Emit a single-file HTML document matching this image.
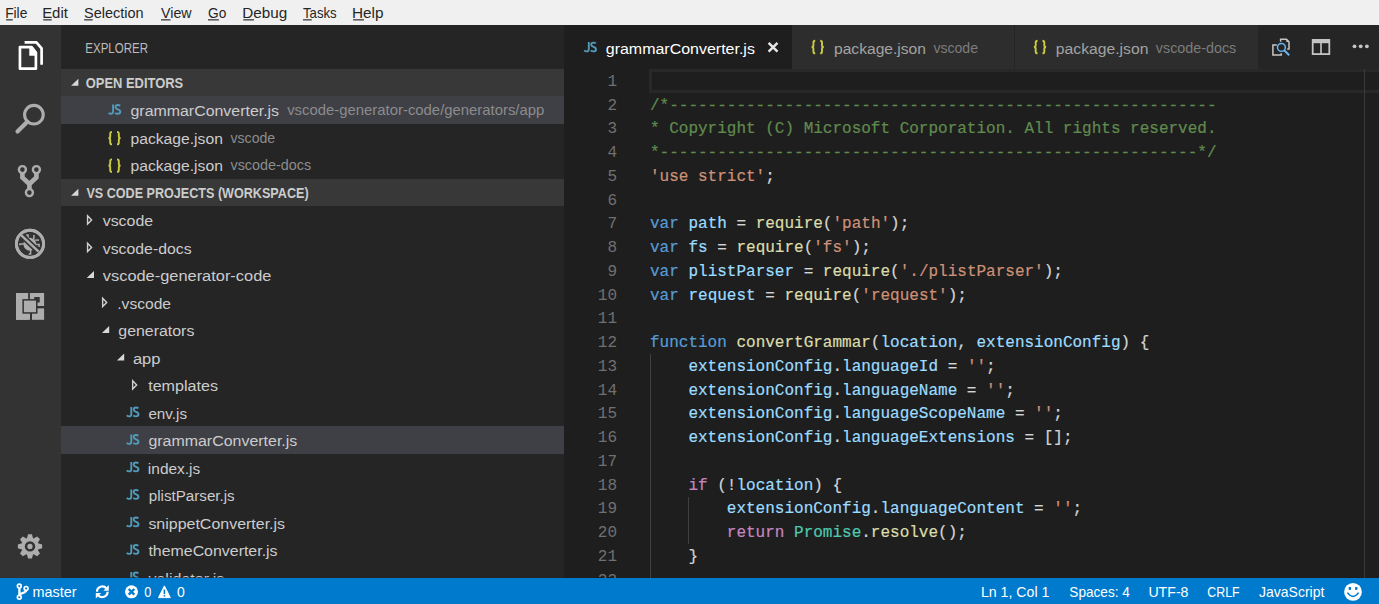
<!DOCTYPE html>
<html><head><meta charset="utf-8">
<style>
*{margin:0;padding:0;box-sizing:border-box}
html,body{width:1379px;height:604px;overflow:hidden;background:#1e1e1e;font-family:"Liberation Sans",sans-serif}
.a{position:absolute}
#menu{left:0;top:0;width:1379px;height:25px;background:#f0f0f0}
#menu span{position:absolute;top:4px;font-size:15px;color:#000;white-space:pre}
#menu span u{text-decoration:none;border-bottom:1.5px solid #6a6a6a}
#act{left:0;top:25px;width:61px;height:553px;background:#333333}
#side{left:61px;top:25px;width:503px;height:553px;background:#252526;overflow:hidden}
.hdr{position:absolute;left:0;width:503px;height:27.5px;background:#383838;color:#cccccc;font-weight:bold;font-size:14.5px}
.row{position:absolute;left:0;width:503px;height:27.5px;color:#cccccc;font-size:16px;white-space:pre}
.row.sel{background:#37373d}
.row .t{position:absolute;top:4px}
.desc{color:#8b8b8b;font-size:15px}
.js{position:absolute;color:#519aba;font-size:11.5px;font-weight:bold;letter-spacing:-0.5px}
.br{position:absolute;color:#cbcb41;font-size:13px;font-weight:bold}
#tabs{left:564px;top:25px;width:815px;height:44px;background:#252526}
.tab{position:absolute;top:0;height:44px;background:#2d2d2d;white-space:pre}
#editor{left:564px;top:69px;width:815px;height:508.5px;background:#1e1e1e;overflow:hidden}
.ln{position:absolute;left:0;width:53px;text-align:right;color:#707070;transform:translateY(2px);font-family:"Liberation Mono",monospace;font-size:16px;height:23.75px;line-height:23.75px}
.cl{position:absolute;left:86px;transform:translateY(2px);-webkit-text-stroke:0.2px currentColor;font-family:"Liberation Mono",monospace;font-size:16px;height:23.75px;line-height:23.75px;white-space:pre;color:#d4d4d4}
.c{color:#608b4e}.s{color:#ce9178}.k{color:#569cd6}.v{color:#9cdcfe}.f{color:#dcdcaa}.p{color:#c586c0}.y{color:#4ec9b0}
#status{left:0;top:577.5px;width:1379px;height:26.5px;background:#007acc;color:#fff;font-size:14.2px}
#status span{position:absolute;top:5px;white-space:pre}
</style></head><body>
<div id="menu" class="a"></div>
<div id="act" class="a">
<svg class="a" style="left:0;top:0" width="61" height="553" viewBox="0 25 61 553">
 <!-- files -->
 <g fill="none" stroke="#ffffff" stroke-width="2.7" stroke-linejoin="round">
  <path d="M19.95 47.2 H31.6 L35.9 52.6 V68.7 H19.95 Z"/>
  <path d="M24.6 42.4 H36.4 L41.6 48.4 V64.8"/>
 </g>
 <path d="M29.3 46.5 H31.8 L36.6 52.4 V55.7 H29.3 Z" fill="#fff"/>
 <!-- search -->
 <g stroke="#adadad" fill="none">
  <circle cx="33.9" cy="114.7" r="9.3" stroke-width="3.1"/>
  <path d="M27.3 121.8 L17.5 131.5" stroke-width="4.2" stroke-linecap="round"/>
 </g>
 <!-- scm -->
 <g stroke="#adadad" fill="none" stroke-width="2.4">
  <circle cx="22.4" cy="169.6" r="3.5"/>
  <circle cx="36.4" cy="169.6" r="3.5"/>
  <circle cx="29.4" cy="192.6" r="3.5"/>
 </g>
 <path d="M22.4 173 V177.5 L29.4 184 L36.4 177.5 V173 M29.4 184 V189" stroke="#adadad" stroke-width="4.6" fill="none" stroke-linejoin="miter"/>
 <!-- debug -->
 <circle cx="30" cy="243.8" r="13.6" stroke="#adadad" stroke-width="2.9" fill="none"/>
 <ellipse cx="29.8" cy="244.2" rx="6.3" ry="6.5" fill="#adadad"/>
 <g stroke="#adadad" stroke-width="1.5" fill="none">
  <path d="M26.2 234.9 H28 V240"/>
  <path d="M33.9 235 V239.3"/>
  <path d="M35.2 240.1 H39"/>
  <path d="M35 244.6 H39.1 V247"/>
  <path d="M19.9 245.3 V244 H24.2"/>
  <path d="M30.6 249.5 V254 H28.7"/>
 </g>
 <path d="M20.6 234.6 L38.6 251.6" stroke="#333333" stroke-width="5.6"/>
 <path d="M20.6 234.6 L38.6 251.6" stroke="#adadad" stroke-width="2.5"/>
 <circle cx="30" cy="243.8" r="13.6" stroke="#adadad" stroke-width="2.9" fill="none"/>
 <!-- extensions -->
 <g fill="#adadad">
  <rect x="16" y="293" width="12.2" height="26.8"/>
  <rect x="28.2" y="293" width="2" height="7"/>
  <rect x="16" y="312.5" width="14.2" height="7.3"/>
  <rect x="29.9" y="293" width="14.2" height="13"/>
  <rect x="32" y="308.2" width="12.1" height="11.6"/>
 </g>
 <rect x="34.2" y="297" width="5.5" height="5.5" fill="#333333"/>
 <rect x="22.4" y="299.1" width="15.1" height="14.6" fill="#333333"/>
 <rect x="23.9" y="300.6" width="12.1" height="11.6" fill="#adadad"/>
 <rect x="28.2" y="293" width="1.7" height="6.3" fill="#333333"/>
 <rect x="30.2" y="313.5" width="1.7" height="6.3" fill="#333333"/>
 <rect x="37.3" y="306" width="6.8" height="2.2" fill="#333333"/>
 <!-- gear -->
 <g transform="translate(30 546.4)">
  <path fill="#adadad" d="M-3.03 -8.05 L-1.96 -12.14 L1.96 -12.14 L3.03 -8.05 L3.55 -7.83 L7.20 -9.97 L9.97 -7.20 L7.83 -3.55 L8.05 -3.03 L12.14 -1.96 L12.14 1.96 L8.05 3.03 L7.83 3.55 L9.97 7.20 L7.20 9.97 L3.55 7.83 L3.03 8.05 L1.96 12.14 L-1.96 12.14 L-3.03 8.05 L-3.55 7.83 L-7.20 9.97 L-9.97 7.20 L-7.83 3.55 L-8.05 3.03 L-12.14 1.96 L-12.14 -1.96 L-8.05 -3.03 L-7.83 -3.55 L-9.97 -7.20 L-7.20 -9.97 L-3.55 -7.83Z"/>
  <circle r="5.2" fill="#333333"/>
  <circle r="2.6" fill="#adadad"/>
 </g>
</svg>
</div>
<div id="side" class="a"><div class="a" style="left:0;top:43.75px;width:503px;height:27.5px;background:#383838"></div><div class="a" style="left:0;top:153.75px;width:503px;height:27.5px;background:#383838"></div><div class="a" style="left:0;top:71.25px;width:503px;height:27.5px;background:#3f3f46"></div><div class="a" style="left:0;top:401.25px;width:503px;height:27.5px;background:#3f3f46"></div></div>
<div id="tabs" class="a"><div class="a" style="left:0;top:0;width:228px;height:44px;background:#1e1e1e"></div><div class="a" style="left:228px;top:0;width:222px;height:44px;background:#2d2d2d"></div><div class="a" style="left:451px;top:0;width:243px;height:44px;background:#2d2d2d"></div></div>
<svg class="a" style="left:1262px;top:32px" width="117" height="30" viewBox="1262 32 117 30">
 <g fill="none" stroke="#c5c5c5" stroke-width="1.5">
  <path d="M1280.6 41.8 V39.2 H1286.5 L1289 41.8 V48.9 H1287.2"/>
  <path d="M1276.8 45 H1272.9 V55.1 H1281.2 V53.2"/>
 </g>
 <path d="M1286.3 39 L1289.2 42 L1286.3 42 Z" fill="#c5c5c5"/>
 <circle cx="1281.4" cy="47.4" r="3.9" stroke="#6ab4ee" stroke-width="1.5" fill="none"/>
 <path d="M1284.2 50.2 L1289.2 55.2" stroke="#6ab4ee" stroke-width="2"/>
 <rect x="1312.7" y="40" width="16.6" height="14.1" stroke="#c5c5c5" stroke-width="1.8" fill="none"/>
 <rect x="1312" y="39.2" width="18" height="4" fill="#c5c5c5"/>
 <rect x="1320.2" y="40" width="1.6" height="14" fill="#c5c5c5"/>
 <circle cx="1354.5" cy="46.3" r="1.9" fill="#c5c5c5"/>
 <circle cx="1360.7" cy="46.3" r="1.9" fill="#c5c5c5"/>
 <circle cx="1366.9" cy="46.3" r="1.9" fill="#c5c5c5"/>
</svg>
<div id="editor" class="a">
<div class="a" style="left:85px;top:0;width:740px;height:23.8px;border:3px solid #282828"></div>
<div class="ln" style="top:0px">1</div><div class="cl" style="top:0px"></div>
<div class="ln" style="top:24px">2</div><div class="cl" style="top:24px"><span class=c>/*---------------------------------------------------------</span></div>
<div class="ln" style="top:47px">3</div><div class="cl" style="top:47px"><span class=c>* Copyright (C) Microsoft Corporation. All rights reserved.</span></div>
<div class="ln" style="top:71px">4</div><div class="cl" style="top:71px"><span class=c>*--------------------------------------------------------*/</span></div>
<div class="ln" style="top:95px">5</div><div class="cl" style="top:95px"><span class=s>'use strict'</span>;</div>
<div class="ln" style="top:119px">6</div><div class="cl" style="top:119px"></div>
<div class="ln" style="top:142px">7</div><div class="cl" style="top:142px"><span class=k>var</span> <span class=v>path</span> = <span class=f>require</span>(<span class=s>'path'</span>);</div>
<div class="ln" style="top:166px">8</div><div class="cl" style="top:166px"><span class=k>var</span> <span class=v>fs</span> = <span class=f>require</span>(<span class=s>'fs'</span>);</div>
<div class="ln" style="top:190px">9</div><div class="cl" style="top:190px"><span class=k>var</span> <span class=v>plistParser</span> = <span class=f>require</span>(<span class=s>'./plistParser'</span>);</div>
<div class="ln" style="top:214px">10</div><div class="cl" style="top:214px"><span class=k>var</span> <span class=v>request</span> = <span class=f>require</span>(<span class=s>'request'</span>);</div>
<div class="ln" style="top:237px">11</div><div class="cl" style="top:237px"></div>
<div class="ln" style="top:261px">12</div><div class="cl" style="top:261px"><span class=k>function</span> <span class=f>convertGrammar</span>(<span class=v>location</span>, <span class=v>extensionConfig</span>) {</div>
<div class="ln" style="top:285px">13</div><div class="cl" style="top:285px">    <span class=v>extensionConfig</span>.<span class=v>languageId</span> = <span class=s>''</span>;</div>
<div class="ln" style="top:309px">14</div><div class="cl" style="top:309px">    <span class=v>extensionConfig</span>.<span class=v>languageName</span> = <span class=s>''</span>;</div>
<div class="ln" style="top:332px">15</div><div class="cl" style="top:332px">    <span class=v>extensionConfig</span>.<span class=v>languageScopeName</span> = <span class=s>''</span>;</div>
<div class="ln" style="top:356px">16</div><div class="cl" style="top:356px">    <span class=v>extensionConfig</span>.<span class=v>languageExtensions</span> = [];</div>
<div class="ln" style="top:380px">17</div><div class="cl" style="top:380px"></div>
<div class="ln" style="top:404px">18</div><div class="cl" style="top:404px">    <span class=p>if</span> (!<span class=v>location</span>) {</div>
<div class="ln" style="top:427px">19</div><div class="cl" style="top:427px">        <span class=v>extensionConfig</span>.<span class=v>languageContent</span> = <span class=s>''</span>;</div>
<div class="ln" style="top:451px">20</div><div class="cl" style="top:451px">        <span class=p>return</span> <span class=y>Promise</span>.<span class=f>resolve</span>();</div>
<div class="ln" style="top:475px">21</div><div class="cl" style="top:475px">    }</div>
<div class="ln" style="top:499px">22</div><div class="cl" style="top:499px"></div>
<div class="a" style="left:85.5px;top:285.0px;width:1px;height:237.5px;background:#404040"></div>
<div class="a" style="left:124px;top:427.5px;width:1px;height:47.5px;background:#404040"></div>
<div class="a" style="left:800px;top:0;width:1px;height:510px;background:#3a3a3a"></div>
</div>
<div id="status" class="a">
<svg class="a" style="left:0;top:0" width="200" height="26.5" viewBox="0 577.5 200 26.5">
 <g stroke="#fff" fill="none" stroke-width="1.7">
  <circle cx="19.3" cy="585.6" r="1.9"/>
  <circle cx="26.1" cy="587.9" r="1.9"/>
  <circle cx="19.3" cy="596.8" r="1.9"/>
 </g>
 <path d="M19.4 587.4 V595 M26.1 589.7 C26.1 593 20 592.3 19.6 594.5" stroke="#fff" stroke-width="2.3" fill="none"/>
 <g stroke="#fff" fill="none" stroke-width="2.2">
  <path d="M97 591.3 A5.3 5.3 0 0 1 106.4 587.9"/>
  <path d="M107.6 591.3 A5.3 5.3 0 0 1 98.2 594.7"/>
 </g>
 <path d="M108.8 584.6 V590.2 H103.4 Z M95.8 598 V592.4 H101.2 Z" fill="#fff"/>
 <circle cx="131.5" cy="591.3" r="6.5" fill="#fff"/>
 <path d="M128.7 588.5 L134.3 594.1 M134.3 588.5 L128.7 594.1" stroke="#007acc" stroke-width="2.3"/>
 <path d="M164.4 585.4 L170.3 597.1 L158.5 597.1 Z" fill="#fff" stroke="#fff" stroke-width="1" stroke-linejoin="round"/>
 <rect x="163.6" y="589" width="1.6" height="4.6" fill="#007acc"/>
 <rect x="163.6" y="594.6" width="1.6" height="1.5" fill="#007acc"/>
</svg>
<svg class="a" style="left:1342px;top:4.5px" width="22" height="20" viewBox="0 0 22 20">
 <circle cx="11" cy="9.9" r="8.9" fill="#fff"/>
 <rect x="6.7" y="5" width="2.3" height="2.9" fill="#007acc"/>
 <rect x="13.1" y="5" width="2.3" height="2.9" fill="#007acc"/>
 <path d="M5.4 10.6 Q11 18.2 16.6 10.6" stroke="#007acc" stroke-width="1.5" fill="none"/>
</svg>
</div>
<svg class="a" style="left:0;top:0;pointer-events:none" width="1379" height="604" font-family="Liberation Sans"><defs><clipPath id="sc"><rect x="61" y="25" width="503" height="552.5"/></clipPath></defs><rect x="6.1" y="19" width="6.7" height="1.6" fill="#5f5f5f"/><rect x="43.2" y="19" width="8.5" height="1.6" fill="#5f5f5f"/><rect x="84.1" y="19" width="8.6" height="1.6" fill="#5f5f5f"/><rect x="161.0" y="19" width="9.5" height="1.6" fill="#5f5f5f"/><rect x="208.0" y="19" width="10.9" height="1.6" fill="#5f5f5f"/><rect x="243.3" y="19" width="10.7" height="1.6" fill="#5f5f5f"/><rect x="303.0" y="19" width="8.7" height="1.6" fill="#5f5f5f"/><rect x="353.1" y="19" width="10.9" height="1.6" fill="#5f5f5f"/>
<path d="M71.10 85.70 L78.40 85.70 L78.40 78.70 Z" fill="#d8d8d8"/>
<path d="M71.10 195.70 L78.40 195.70 L78.40 188.70 Z" fill="#d8d8d8"/>
<g transform="translate(108.10 104.40)" fill="none" stroke="#519aba" stroke-width="1.9"><path d="M5 0 V7.2 Q5 9.4 2.8 9.4 Q1.4 9.4 0.4 8.4"/><path d="M12.1 1.3 Q11.1 0.6 9.7 0.6 Q7.4 0.6 7.4 2.6 Q7.4 4.2 9.7 4.9 Q12.2 5.7 12.2 7.4 Q12.2 9.4 9.6 9.4 Q8.1 9.4 7 8.5"/></g>
<g transform="translate(107.80 130.95)" fill="none" stroke="#cbcb41" stroke-width="1.9"><path d="M4.2 0.9 Q2.4 0.9 2.4 2.8 V5.3 Q2.4 7.15 0.6 7.15 Q2.4 7.15 2.4 9 V11.5 Q2.4 13.4 4.2 13.4"/><path d="M9.2 0.9 Q11 0.9 11 2.8 V5.3 Q11 7.15 12.8 7.15 Q11 7.15 11 9 V11.5 Q11 13.4 9.2 13.4"/></g>
<g transform="translate(107.80 158.45)" fill="none" stroke="#cbcb41" stroke-width="1.9"><path d="M4.2 0.9 Q2.4 0.9 2.4 2.8 V5.3 Q2.4 7.15 0.6 7.15 Q2.4 7.15 2.4 9 V11.5 Q2.4 13.4 4.2 13.4"/><path d="M9.2 0.9 Q11 0.9 11 2.8 V5.3 Q11 7.15 12.8 7.15 Q11 7.15 11 9 V11.5 Q11 13.4 9.2 13.4"/></g>
<path d="M87.55 215.80 L91.60 219.95 L87.55 224.10 Z" fill="none" stroke="#d0d0d0" stroke-width="1.4" stroke-linejoin="miter"/>
<path d="M87.55 243.30 L91.60 247.45 L87.55 251.60 Z" fill="none" stroke="#d0d0d0" stroke-width="1.4" stroke-linejoin="miter"/>
<path d="M86.70 277.95 L94.00 277.95 L94.00 270.95 Z" fill="#d8d8d8"/>
<path d="M102.65 298.30 L106.70 302.45 L102.65 306.60 Z" fill="none" stroke="#d0d0d0" stroke-width="1.4" stroke-linejoin="miter"/>
<path d="M101.90 332.95 L109.20 332.95 L109.20 325.95 Z" fill="#d8d8d8"/>
<path d="M116.90 360.45 L124.20 360.45 L124.20 353.45 Z" fill="#d8d8d8"/>
<path d="M132.65 380.80 L136.70 384.95 L132.65 389.10 Z" fill="none" stroke="#d0d0d0" stroke-width="1.4" stroke-linejoin="miter"/>
<g transform="translate(126.30 406.95)" fill="none" stroke="#519aba" stroke-width="1.9"><path d="M5 0 V7.2 Q5 9.4 2.8 9.4 Q1.4 9.4 0.4 8.4"/><path d="M12.1 1.3 Q11.1 0.6 9.7 0.6 Q7.4 0.6 7.4 2.6 Q7.4 4.2 9.7 4.9 Q12.2 5.7 12.2 7.4 Q12.2 9.4 9.6 9.4 Q8.1 9.4 7 8.5"/></g>
<g transform="translate(126.30 434.45)" fill="none" stroke="#519aba" stroke-width="1.9"><path d="M5 0 V7.2 Q5 9.4 2.8 9.4 Q1.4 9.4 0.4 8.4"/><path d="M12.1 1.3 Q11.1 0.6 9.7 0.6 Q7.4 0.6 7.4 2.6 Q7.4 4.2 9.7 4.9 Q12.2 5.7 12.2 7.4 Q12.2 9.4 9.6 9.4 Q8.1 9.4 7 8.5"/></g>
<g transform="translate(126.30 461.95)" fill="none" stroke="#519aba" stroke-width="1.9"><path d="M5 0 V7.2 Q5 9.4 2.8 9.4 Q1.4 9.4 0.4 8.4"/><path d="M12.1 1.3 Q11.1 0.6 9.7 0.6 Q7.4 0.6 7.4 2.6 Q7.4 4.2 9.7 4.9 Q12.2 5.7 12.2 7.4 Q12.2 9.4 9.6 9.4 Q8.1 9.4 7 8.5"/></g>
<g transform="translate(126.30 489.45)" fill="none" stroke="#519aba" stroke-width="1.9"><path d="M5 0 V7.2 Q5 9.4 2.8 9.4 Q1.4 9.4 0.4 8.4"/><path d="M12.1 1.3 Q11.1 0.6 9.7 0.6 Q7.4 0.6 7.4 2.6 Q7.4 4.2 9.7 4.9 Q12.2 5.7 12.2 7.4 Q12.2 9.4 9.6 9.4 Q8.1 9.4 7 8.5"/></g>
<g transform="translate(126.30 516.95)" fill="none" stroke="#519aba" stroke-width="1.9"><path d="M5 0 V7.2 Q5 9.4 2.8 9.4 Q1.4 9.4 0.4 8.4"/><path d="M12.1 1.3 Q11.1 0.6 9.7 0.6 Q7.4 0.6 7.4 2.6 Q7.4 4.2 9.7 4.9 Q12.2 5.7 12.2 7.4 Q12.2 9.4 9.6 9.4 Q8.1 9.4 7 8.5"/></g>
<g transform="translate(126.30 544.45)" fill="none" stroke="#519aba" stroke-width="1.9"><path d="M5 0 V7.2 Q5 9.4 2.8 9.4 Q1.4 9.4 0.4 8.4"/><path d="M12.1 1.3 Q11.1 0.6 9.7 0.6 Q7.4 0.6 7.4 2.6 Q7.4 4.2 9.7 4.9 Q12.2 5.7 12.2 7.4 Q12.2 9.4 9.6 9.4 Q8.1 9.4 7 8.5"/></g>
<g clip-path="url(#sc)"><g transform="translate(126.30 571.95)" fill="none" stroke="#519aba" stroke-width="1.9"><path d="M5 0 V7.2 Q5 9.4 2.8 9.4 Q1.4 9.4 0.4 8.4"/><path d="M12.1 1.3 Q11.1 0.6 9.7 0.6 Q7.4 0.6 7.4 2.6 Q7.4 4.2 9.7 4.9 Q12.2 5.7 12.2 7.4 Q12.2 9.4 9.6 9.4 Q8.1 9.4 7 8.5"/></g></g>
<g transform="translate(583.80 42.00)" fill="none" stroke="#519aba" stroke-width="1.9"><path d="M5 0 V7.2 Q5 9.4 2.8 9.4 Q1.4 9.4 0.4 8.4"/><path d="M12.1 1.3 Q11.1 0.6 9.7 0.6 Q7.4 0.6 7.4 2.6 Q7.4 4.2 9.7 4.9 Q12.2 5.7 12.2 7.4 Q12.2 9.4 9.6 9.4 Q8.1 9.4 7 8.5"/></g>
<g transform="translate(811.00 39.90)" fill="none" stroke="#cbcb41" stroke-width="1.9"><path d="M4.2 0.9 Q2.4 0.9 2.4 2.8 V5.3 Q2.4 7.15 0.6 7.15 Q2.4 7.15 2.4 9 V11.5 Q2.4 13.4 4.2 13.4"/><path d="M9.2 0.9 Q11 0.9 11 2.8 V5.3 Q11 7.15 12.8 7.15 Q11 7.15 11 9 V11.5 Q11 13.4 9.2 13.4"/></g>
<g transform="translate(1033.30 39.90)" fill="none" stroke="#cbcb41" stroke-width="1.9"><path d="M4.2 0.9 Q2.4 0.9 2.4 2.8 V5.3 Q2.4 7.15 0.6 7.15 Q2.4 7.15 2.4 9 V11.5 Q2.4 13.4 4.2 13.4"/><path d="M9.2 0.9 Q11 0.9 11 2.8 V5.3 Q11 7.15 12.8 7.15 Q11 7.15 11 9 V11.5 Q11 13.4 9.2 13.4"/></g>
<path d="M768.6 42.9 L777.5 51.6 M777.5 42.9 L768.6 51.6" stroke="#e6e6e6" stroke-width="2.5"/>
<text x="5.15" y="17.70" font-size="14.5" fill="#262626" textLength="22.21" lengthAdjust="spacingAndGlyphs">File</text>
<text x="42.17" y="17.70" font-size="14.5" fill="#262626" textLength="25.76" lengthAdjust="spacingAndGlyphs">Edit</text>
<text x="84.10" y="17.70" font-size="14.5" fill="#262626" textLength="59.56" lengthAdjust="spacingAndGlyphs">Selection</text>
<text x="161.00" y="17.70" font-size="14.5" fill="#262626" textLength="30.68" lengthAdjust="spacingAndGlyphs">View</text>
<text x="208.00" y="17.70" font-size="14.5" fill="#262626" textLength="18.26" lengthAdjust="spacingAndGlyphs">Go</text>
<text x="242.25" y="17.70" font-size="14.5" fill="#262626" textLength="44.92" lengthAdjust="spacingAndGlyphs">Debug</text>
<text x="303.00" y="17.70" font-size="14.5" fill="#262626" textLength="33.63" lengthAdjust="spacingAndGlyphs">Tasks</text>
<text x="352.04" y="17.70" font-size="14.5" fill="#262626" textLength="31.53" lengthAdjust="spacingAndGlyphs">Help</text>
<text x="85.28" y="53.00" font-size="14" fill="#bbbbbb" textLength="62.71" lengthAdjust="spacingAndGlyphs">EXPLORER</text>
<text x="85.80" y="87.80" font-size="14" font-weight="bold" fill="#cccccc" textLength="97.31" lengthAdjust="spacingAndGlyphs">OPEN EDITORS</text>
<text x="86.40" y="198.20" font-size="14" font-weight="bold" fill="#cccccc" textLength="222.20" lengthAdjust="spacingAndGlyphs">VS CODE PROJECTS (WORKSPACE)</text>
<text x="130.50" y="116.25" font-size="15.2" fill="#cccccc" textLength="148.57" lengthAdjust="spacingAndGlyphs">grammarConverter.js</text>
<text x="287.20" y="115.35" font-size="15.0" fill="#8c8c8c" textLength="257.14" lengthAdjust="spacingAndGlyphs">vscode-generator-code/generators/app</text>
<text x="130.50" y="143.75" font-size="15.2" fill="#cccccc" textLength="92.36" lengthAdjust="spacingAndGlyphs">package.json</text>
<text x="230.50" y="142.85" font-size="15.0" fill="#8c8c8c" textLength="44.72" lengthAdjust="spacingAndGlyphs">vscode</text>
<text x="130.50" y="171.25" font-size="15.2" fill="#cccccc" textLength="92.36" lengthAdjust="spacingAndGlyphs">package.json</text>
<text x="230.50" y="170.35" font-size="15.0" fill="#8c8c8c" textLength="80.68" lengthAdjust="spacingAndGlyphs">vscode-docs</text>
<text x="102.70" y="226.25" font-size="15.2" fill="#cccccc" textLength="50.47" lengthAdjust="spacingAndGlyphs">vscode</text>
<text x="102.80" y="253.75" font-size="15.2" fill="#cccccc" textLength="88.78" lengthAdjust="spacingAndGlyphs">vscode-docs</text>
<text x="102.80" y="281.25" font-size="15.2" fill="#cccccc" textLength="168.58" lengthAdjust="spacingAndGlyphs">vscode-generator-code</text>
<text x="117.27" y="308.75" font-size="15.2" fill="#cccccc" textLength="53.79" lengthAdjust="spacingAndGlyphs">.vscode</text>
<text x="118.30" y="336.25" font-size="15.2" fill="#cccccc" textLength="76.07" lengthAdjust="spacingAndGlyphs">generators</text>
<text x="132.90" y="363.75" font-size="15.2" fill="#cccccc" textLength="27.59" lengthAdjust="spacingAndGlyphs">app</text>
<text x="148.20" y="391.25" font-size="15.2" fill="#cccccc" textLength="69.87" lengthAdjust="spacingAndGlyphs">templates</text>
<text x="148.40" y="418.75" font-size="15.2" fill="#cccccc" textLength="38.59" lengthAdjust="spacingAndGlyphs">env.js</text>
<text x="148.40" y="446.25" font-size="15.2" fill="#cccccc" textLength="148.87" lengthAdjust="spacingAndGlyphs">grammarConverter.js</text>
<text x="147.88" y="473.75" font-size="15.2" fill="#cccccc" textLength="52.40" lengthAdjust="spacingAndGlyphs">index.js</text>
<text x="148.80" y="501.25" font-size="15.2" fill="#cccccc" textLength="85.89" lengthAdjust="spacingAndGlyphs">plistParser.js</text>
<text x="148.40" y="528.75" font-size="15.2" fill="#cccccc" textLength="136.67" lengthAdjust="spacingAndGlyphs">snippetConverter.js</text>
<text x="148.40" y="556.25" font-size="15.2" fill="#cccccc" textLength="129.17" lengthAdjust="spacingAndGlyphs">themeConverter.js</text>
<text x="148.40" y="583.75" font-size="15.2" fill="#cccccc" textLength="75.87" lengthAdjust="spacingAndGlyphs" clip-path="url(#sc)">validator.js</text>
<text x="605.80" y="53.90" font-size="15.2" fill="#ffffff" textLength="149.07" lengthAdjust="spacingAndGlyphs">grammarConverter.js</text>
<text x="834.00" y="53.90" font-size="15.2" fill="#a3a3a3" textLength="91.96" lengthAdjust="spacingAndGlyphs">package.json</text>
<text x="933.40" y="53.00" font-size="15.0" fill="#7c7c7c" textLength="44.62" lengthAdjust="spacingAndGlyphs">vscode</text>
<text x="1055.80" y="53.90" font-size="15.2" fill="#a3a3a3" textLength="92.66" lengthAdjust="spacingAndGlyphs">package.json</text>
<text x="1155.80" y="53.00" font-size="15.0" fill="#7c7c7c" textLength="80.48" lengthAdjust="spacingAndGlyphs">vscode-docs</text>
<text x="32.60" y="597.30" font-size="14.2" fill="#ffffff" textLength="44.02" lengthAdjust="spacingAndGlyphs">master</text>
<text x="144.30" y="597.30" font-size="14.2" fill="#ffffff" textLength="7.10" lengthAdjust="spacingAndGlyphs">0</text>
<text x="177.00" y="597.30" font-size="14.2" fill="#ffffff" textLength="7.79" lengthAdjust="spacingAndGlyphs">0</text>
<text x="980.90" y="597.30" font-size="14.2" fill="#ffffff" textLength="68.49" lengthAdjust="spacingAndGlyphs">Ln 1, Col 1</text>
<text x="1069.30" y="597.30" font-size="14.2" fill="#ffffff" textLength="60.59" lengthAdjust="spacingAndGlyphs">Spaces: 4</text>
<text x="1148.40" y="597.30" font-size="14.2" fill="#ffffff" textLength="40.09" lengthAdjust="spacingAndGlyphs">UTF-8</text>
<text x="1207.30" y="597.30" font-size="14.2" fill="#ffffff" textLength="32.41" lengthAdjust="spacingAndGlyphs">CRLF</text>
<text x="1259.00" y="597.30" font-size="14.2" fill="#ffffff" textLength="65.34" lengthAdjust="spacingAndGlyphs">JavaScript</text></svg>
</body></html>
